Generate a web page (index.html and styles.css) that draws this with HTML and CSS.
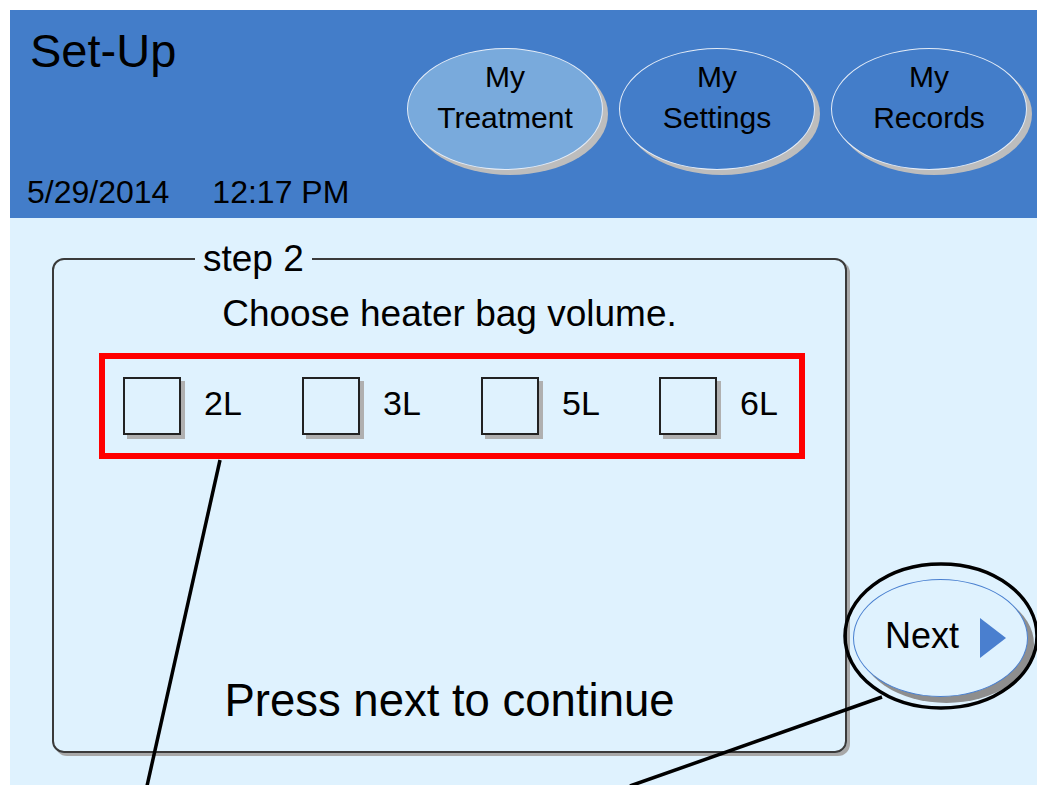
FILE: index.html
```html
<!DOCTYPE html>
<html lang="en">
<head>
<meta charset="utf-8">
<title>Set-Up</title>
<link rel="stylesheet" href="styles.css">
</head>
<body>
<div class="screen">
  <header class="topbar">
    <div class="titles">
      <h1 class="title">Set-Up</h1>
      <div class="datetime"><span>5/29/2014</span><span>12:17 PM</span></div>
    </div>
    <nav class="tabs">
      <div class="tab active">My<br>Treatment</div>
      <div class="tab">My<br>Settings</div>
      <div class="tab">My<br>Records</div>
    </nav>
  </header>
  <main class="content">
    <fieldset class="step">
      <legend class="step-legend">step 2</legend>
      <div class="step-body">
        <p class="prompt">Choose heater bag volume.</p>
        <div class="choices">
          <label class="choice"><span class="box"></span><span class="lbl">2L</span></label>
          <label class="choice"><span class="box"></span><span class="lbl">3L</span></label>
          <label class="choice"><span class="box"></span><span class="lbl">5L</span></label>
          <label class="choice"><span class="box"></span><span class="lbl">6L</span></label>
        </div>
        <p class="hint">Press next to continue</p>
      </div>
    </fieldset>
    <div class="side">
      <button class="next" type="button"><span class="next-text">Next</span><svg class="next-arrow" width="26" height="40" viewBox="0 0 26 40"><polygon points="0,0 26,20 0,40" fill="#4A7FCF"/></svg></button>
    </div>
  </main>
  <svg class="annot" width="1027" height="775" viewBox="0 0 1027 775">
    <line x1="210" y1="450" x2="137" y2="776" stroke="#000" stroke-width="3.5"/>
    <line x1="872" y1="687" x2="620" y2="776" stroke="#000" stroke-width="3.5"/>
    <ellipse cx="931" cy="626" rx="96" ry="72" fill="none" stroke="#000" stroke-width="3.5"/>
  </svg>
</div>
</body>
</html>
```

FILE: styles.css
```css
* { box-sizing: border-box; }
html, body { margin: 0; padding: 0; background: #ffffff; }
body { font-family: "Liberation Sans", Arial, sans-serif; color: #000; }

.screen {
  position: relative;
  margin: 10px 0 0 10px;
  width: 1027px;
  height: 775px;
  overflow: hidden;
  background: #DFF2FE;
}

.topbar {
  height: 208px;
  background: #437DC9;
  display: flex;
  padding: 0 10px 0 17px;
}
.titles {
  display: flex;
  flex-direction: column;
  justify-content: space-between;
  padding: 17px 0 10px 0;
}
.title {
  margin: 0;
  padding-left: 3px;
  font-size: 47px;
  line-height: 47px;
  font-weight: normal;
}
.datetime {
  display: flex;
  gap: 43px;
  font-size: 32px;
  line-height: 32px;
}
.tabs {
  margin-left: auto;
  margin-top: 38px;
  display: flex;
  gap: 16px;
  align-self: flex-start;
}
.tab {
  width: 196px;
  height: 122px;
  border-radius: 50%;
  border: 1.5px solid #E4ECF7;
  box-shadow: 5px 5px 0 #BDBDBD;
  background: #437DC9;
  text-align: center;
  font-size: 30px;
  line-height: 41px;
  padding-top: 7px;
}
.tab.active { background: #79AADC; }

.content {
  display: flex;
  align-items: flex-start;
  padding-left: 42px;
}
.step {
  margin: 26px 0 0 0;
  width: 795px;
  padding: 0;
  border: 2px solid #3A3A3A;
  border-radius: 12px;
  box-shadow: 3px 3px 0 #A8A8A8;
  min-inline-size: 0;
}
.step-legend {
  margin-left: 141px;
  padding: 0 8px;
  font-size: 37px;
  line-height: 30px;
}
.step-body {
  height: 477px;
  display: flex;
  flex-direction: column;
}
.prompt {
  margin: 18px 0 0 0;
  text-align: center;
  font-size: 37px;
  line-height: 44px;
}
.choices {
  margin: 17px 0 0 45px;
  width: 706px;
  height: 106px;
  border: 6px solid #FF0000;
  display: grid;
  grid-template-columns: 179px 179px 178px 1fr;
  align-items: center;
  padding-left: 18px;
}
.choice {
  display: flex;
  align-items: center;
  gap: 23px;
}
.box {
  width: 58px;
  height: 58px;
  border: 2px solid #222;
  box-shadow: 4px 4px 0 #B0B0B0;
  background: #DFF2FE;
  flex: none;
}
.lbl {
  font-size: 34px;
  line-height: 34px;
  margin-top: -6px;
}
.hint {
  margin: auto 0 20px 0;
  text-align: center;
  font-size: 45.5px;
  line-height: 60px;
}

.side {
  margin: 361px 0 0 6px;
}
.next {
  width: 175px;
  height: 118px;
  border-radius: 50%;
  border: 1.5px solid #4A80D0;
  background: #DFF2FE;
  box-shadow: 6px 6px 0 #8E8E8E;
  display: flex;
  align-items: center;
  justify-content: center;
  gap: 21px;
  padding: 0 0 0 10px;
  font-family: "Liberation Sans", Arial, sans-serif;
  font-size: 36px;
  color: #000;
}
.next-text { line-height: 40px; margin-top: -4px; }
.next-arrow { display: block; }

.annot {
  position: absolute;
  left: 0;
  top: 0;
  pointer-events: none;
}
```
